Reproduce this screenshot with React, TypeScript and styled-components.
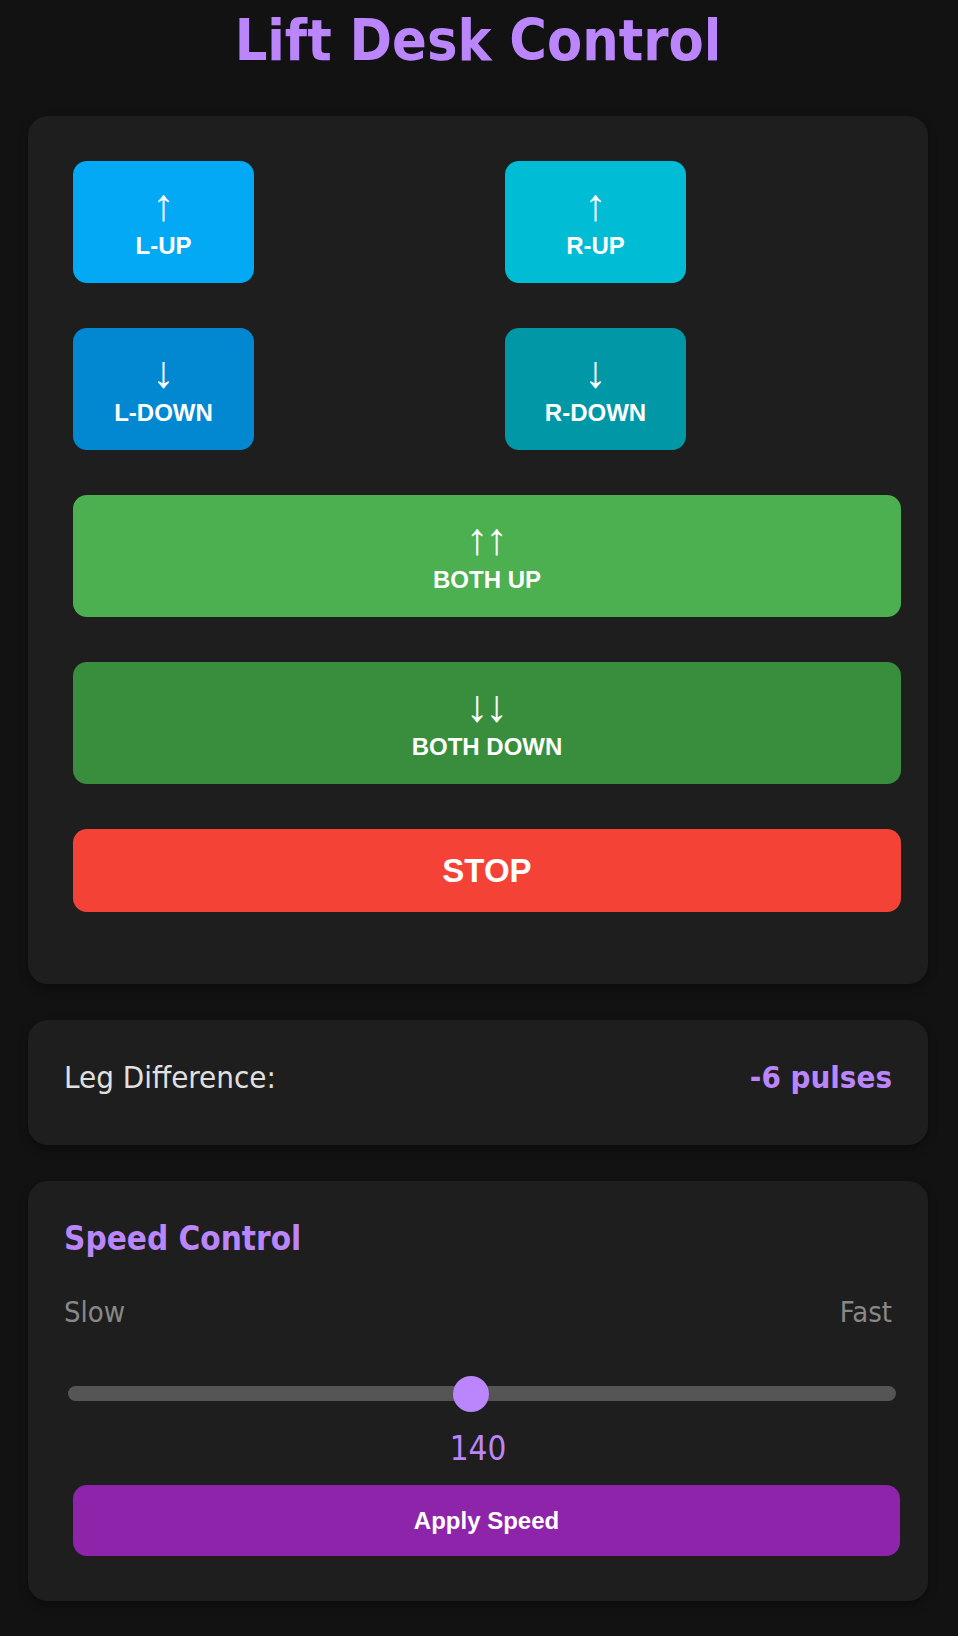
import React, { useState } from "react";
import styled, { createGlobalStyle } from "styled-components";

const GlobalStyle = createGlobalStyle`
  html, body {
    margin: 0;
    padding: 0;
    background: #121212;
  }
  body {
    font-family: "DejaVu Sans Condensed", "DejaVu Sans", Verdana, sans-serif;
    font-stretch: condensed;
    color: #e0e0e0;
  }
  *, *::before, *::after {
    box-sizing: border-box;
  }
`;

const Page = styled.main`
  width: 958px;
  min-height: 1636px;
  padding: 0 30px 35px 28px;
  display: flex;
  flex-direction: column;
`;

const Title = styled.h1`
  margin: 5px 0 41px;
  font-size: 57px;
  line-height: 70px;
  font-weight: 700;
  color: #bb86fc;
  text-align: center;
`;

const Stack = styled.div`
  display: flex;
  flex-direction: column;
  gap: 36px;
`;

const Card = styled.section`
  background: #1e1e1e;
  border-radius: 20px;
  box-shadow: 0 4px 10px rgba(0, 0, 0, 0.35);
`;

const ControlGrid = styled(Card)`
  display: grid;
  grid-template-columns: 396px 396px;
  column-gap: 36px;
  row-gap: 45px;
  padding: 45px 27px 72px 45px;
`;

const ActionButton = styled.button<{ $bg: string; $wide?: boolean; $h: number }>`
  grid-column: ${(p) => (p.$wide ? "1 / -1" : "auto")};
  width: ${(p) => (p.$wide ? "100%" : "181px")};
  height: ${(p) => p.$h}px;
  background: ${(p) => p.$bg};
  color: #ffffff;
  border: none;
  border-radius: 14px;
  padding: 0;
  font-family: "Liberation Sans", Arial, Helvetica, sans-serif;
  font-stretch: normal;
  font-weight: 700;
  font-size: 24px;
  display: flex;
  flex-direction: column;
  align-items: center;
  justify-content: center;
  cursor: pointer;
`;

const Arrow = styled.span`
  display: block;
  font-weight: 400;
  font-size: 45px;
  line-height: 44px;
  letter-spacing: -3px;
  padding-right: 3px;
  margin-top: -3px;
  margin-bottom: 5px;
`;

const Label = styled.span`
  display: block;
  line-height: 27px;
`;

const StopLabel = styled.span`
  font-size: 33px;
  line-height: 38px;
`;

const DiffCard = styled(Card)`
  height: 125px;
  padding: 38px 36px 0;
  display: flex;
  justify-content: space-between;
  align-items: flex-start;
  font-size: 31px;
  line-height: 38px;
`;

const DiffLabel = styled.span`
  color: #e0e0e0;
`;

const DiffValue = styled.span`
  color: #bb86fc;
  font-weight: 700;
`;

const SpeedCard = styled(Card)`
  padding: 38px 36px 45px;
  display: flex;
  flex-direction: column;
`;

const SectionTitle = styled.h3`
  margin: 0;
  font-size: 33px;
  line-height: 40px;
  font-weight: 700;
  color: #bb86fc;
`;

const RangeLabels = styled.div`
  margin-top: 36px;
  display: flex;
  justify-content: space-between;
  font-size: 29px;
  line-height: 34px;
  color: #888888;
`;

const Slider = styled.input`
  -webkit-appearance: none;
  appearance: none;
  display: block;
  width: 828px;
  height: 15px;
  margin: 57px 0 0 4px;
  padding: 0;
  background: #555555;
  border-radius: 8px;
  outline: none;

  &::-webkit-slider-thumb {
    -webkit-appearance: none;
    appearance: none;
    width: 36px;
    height: 36px;
    border-radius: 50%;
    background: #bb86fc;
    border: none;
    cursor: pointer;
  }
  &::-moz-range-thumb {
    width: 36px;
    height: 36px;
    border-radius: 50%;
    background: #bb86fc;
    border: none;
  }
`;

const SpeedValue = styled.div`
  margin-top: 28px;
  font-size: 33px;
  line-height: 40px;
  text-align: center;
  color: #bb86fc;
`;

const ApplyButton = styled.button`
  margin: 16px 0 0 9px;
  width: 827px;
  height: 71px;
  border: none;
  border-radius: 14px;
  background: #8e24aa;
  color: #ffffff;
  font-family: "Liberation Sans", Arial, Helvetica, sans-serif;
  font-stretch: normal;
  font-weight: 700;
  font-size: 24px;
  cursor: pointer;
`;

const moves = [
  { arrow: "↑", label: "L-UP", bg: "#03a9f4" },
  { arrow: "↑", label: "R-UP", bg: "#00bcd4" },
  { arrow: "↓", label: "L-DOWN", bg: "#0288d1" },
  { arrow: "↓", label: "R-DOWN", bg: "#0097a7" },
];

export default function App() {
  const [speed, setSpeed] = useState(140);
  return (
    <>
      <GlobalStyle />
      <Page>
        <Title>Lift Desk Control</Title>
        <Stack>
          <ControlGrid>
            {moves.map((m) => (
              <ActionButton key={m.label} $bg={m.bg} $h={122}>
                <Arrow>{m.arrow}</Arrow>
                <Label>{m.label}</Label>
              </ActionButton>
            ))}
            <ActionButton $bg="#4caf50" $wide $h={122}>
              <Arrow>↑↑</Arrow>
              <Label>BOTH UP</Label>
            </ActionButton>
            <ActionButton $bg="#388e3c" $wide $h={122}>
              <Arrow>↓↓</Arrow>
              <Label>BOTH DOWN</Label>
            </ActionButton>
            <ActionButton $bg="#f44336" $wide $h={83}>
              <StopLabel>STOP</StopLabel>
            </ActionButton>
          </ControlGrid>

          <DiffCard>
            <DiffLabel>Leg Difference:</DiffLabel>
            <DiffValue>-6 pulses</DiffValue>
          </DiffCard>

          <SpeedCard>
            <SectionTitle>Speed Control</SectionTitle>
            <RangeLabels>
              <span>Slow</span>
              <span>Fast</span>
            </RangeLabels>
            <Slider
              type="range"
              min={50}
              max={235}
              value={speed}
              onChange={(e) => setSpeed(Number(e.target.value))}
            />
            <SpeedValue>{speed}</SpeedValue>
            <ApplyButton>Apply Speed</ApplyButton>
          </SpeedCard>
        </Stack>
      </Page>
    </>
  );
}
